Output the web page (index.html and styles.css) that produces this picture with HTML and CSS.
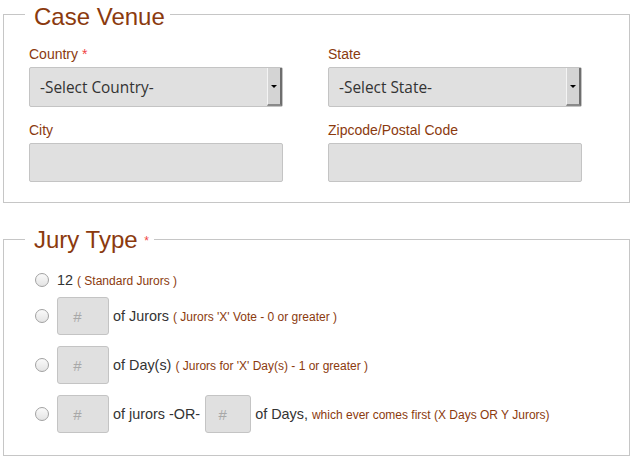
FILE: index.html
```html
<html>
    <head>
        <title>Case Venue</title>
        <link rel="stylesheet" href="styles.css">
    </head>
    <body>
        <fieldset class="box venue">
            <legend>Case Venue</legend>
            <div class="grid">
                <div class="field">
                    <label>Country <span class="req">*</span></label>
                    <div class="select">
                        <select><option>-Select Country-</option></select>
                        <span class="drop"><i></i></span>
                    </div>
                </div>
                <div class="field">
                    <label>State</label>
                    <div class="select">
                        <select><option>-Select State-</option></select>
                        <span class="drop"><i></i></span>
                    </div>
                </div>
                <div class="field">
                    <label>City</label>
                    <input type="text" class="text" />
                </div>
                <div class="field">
                    <label>Zipcode/Postal Code</label>
                    <input type="text" class="text" />
                </div>
            </div>
        </fieldset>

        <fieldset class="box jury">
            <legend>Jury Type <span class="req small">*</span></legend>
            <div class="row first">
                <input type="radio" name="jury" />
                <span class="txt">12 <small>( Standard Jurors )</small></span>
            </div>
            <div class="row">
                <input type="radio" name="jury" />
                <input type="text" class="num" placeholder="#" />
                <span class="txt">of Jurors <small>( Jurors 'X' Vote - 0 or greater )</small></span>
            </div>
            <div class="row">
                <input type="radio" name="jury" />
                <input type="text" class="num" placeholder="#" />
                <span class="txt">of Day(s) <small>( Jurors for 'X' Day(s) - 1 or greater )</small></span>
            </div>
            <div class="row">
                <input type="radio" name="jury" />
                <input type="text" class="num" placeholder="#" />
                <span class="txt">of jurors -OR-</span>
                <input type="text" class="num narrow" placeholder="#" />
                <span class="txt">of Days, <small>which ever comes first (X Days OR Y Jurors)</small></span>
            </div>
        </fieldset>
    </body>
</html>
```

FILE: styles.css
```css
/**/

body {
    margin: 0;
    padding: 0 3px;
    font-family: "Liberation Sans", Arial, sans-serif;
    color: #333;
}

.box {
    margin: 0 0 20px 0;
    padding: 15px 25px 20px 25px;
    border: 1px solid #c6c6c6;
}

.box legend {
    margin-left: -4px;
    padding: 5px 5px 0 9px;
    font-size: 24px;
    line-height: 24px;
    color: #8b3a0e;
}

.req {
    color: #f04444;
    font-size: 14px;
}

.req.small {
    font-size: 12px;
    position: relative;
    top: -3px;
}

.grid {
    display: grid;
    grid-template-columns: 254px 254px;
    column-gap: 45px;
    row-gap: 13px;
}

.field label {
    display: block;
    font-size: 14px;
    line-height: 20px;
    margin-bottom: 3px;
    color: #8b3a0e;
}

.select {
    display: flex;
    height: 40px;
    box-sizing: border-box;
    border: 1px solid #c4c4c4;
    border-radius: 2px;
    background: #e0e0e0;
}

.select select {
    flex: 1;
    appearance: none;
    -webkit-appearance: none;
    border: none;
    background: transparent;
    padding: 0 0 0 10px;
    font-family: "Open Sans", sans-serif;
    font-size: 15.4px;
    color: #333;
    outline: none;
}

.drop {
    width: 15px;
    box-sizing: border-box;
    border-left: 1px solid #f4f4f4;
    border-right: 2px solid #6e6e6e;
    border-bottom: 2px solid #8a8a8a;
    background: #d4d4d4;
    display: flex;
    align-items: center;
    justify-content: center;
}

.drop i {
    width: 0;
    height: 0;
    border-left: 3px solid transparent;
    border-right: 3px solid transparent;
    border-top: 3px solid #000;
}

.text {
    display: block;
    width: 254px;
    height: 39px;
    box-sizing: border-box;
    border: 1px solid #c4c4c4;
    border-radius: 2px;
    background: #e0e0e0;
    margin: 0;
}

.jury {
    padding-top: 16px;
    padding-bottom: 22px;
}

.row {
    display: flex;
    align-items: center;
    margin-top: 11px;
}

.row.first {
    margin-top: 0;
    margin-bottom: -2px;
}

.row input[type=radio] {
    appearance: none;
    -webkit-appearance: none;
    width: 14px;
    height: 14px;
    margin: 0 8px 0 6px;
    border: 1px solid #a2a2a2;
    border-radius: 50%;
    background: linear-gradient(#fafafa, #e4e4e4);
}

.txt {
    font-size: 14.4px;
    color: #333;
}

.txt small {
    font-size: 12px;
    color: #8b3a0e;
}

.num {
    width: 52px;
    height: 38px;
    box-sizing: border-box;
    margin: 0 4px 0 0;
    padding: 0 11px 0 0;
    border: 1px solid #c4c4c4;
    border-radius: 3px;
    background: #e0e0e0;
    text-align: center;
    font-family: "Liberation Sans", Arial, sans-serif;
    font-size: 15px;
}

.num::placeholder {
    color: #a8a8a8;
}

.num.narrow {
    width: 46px;
    margin-left: 5px;
}
/**/
```
